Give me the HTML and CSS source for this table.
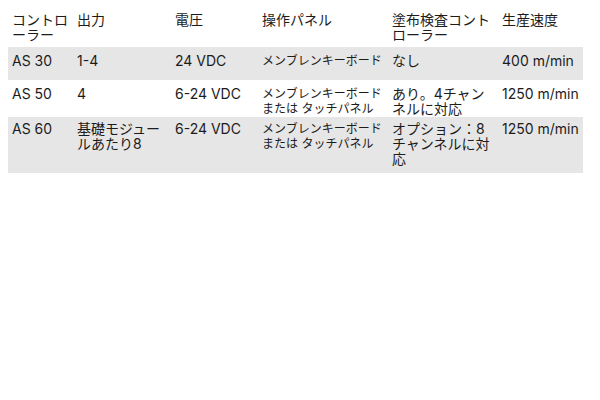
FILE: index.html
```html
<!DOCTYPE html>
<html lang="ja">
<head>
<meta charset="utf-8">
<link rel="stylesheet" href="styles.css">
</head>
<body>
<table class="spec">
  <colgroup>
    <col class="c-model">
    <col class="c-out">
    <col class="c-volt">
    <col class="c-panel">
    <col class="c-check">
    <col class="c-speed">
  </colgroup>
  <thead>
    <tr class="row-head">
      <th>コントローラー</th>
      <th>出力</th>
      <th>電圧</th>
      <th>操作パネル</th>
      <th>塗布検査コントローラー</th>
      <th class="speed">生産速度</th>
    </tr>
  </thead>
  <tbody>
    <tr class="row-a shade">
      <td>AS 30</td>
      <td>1-4</td>
      <td>24 VDC</td>
      <td class="panel">メンブレンキーボード</td>
      <td>なし</td>
      <td class="speed">400 m/min</td>
    </tr>
    <tr class="row-b">
      <td>AS 50</td>
      <td>4</td>
      <td>6-24 VDC</td>
      <td class="panel">メンブレンキーボード または タッチパネル</td>
      <td>あり。4チャンネルに対応</td>
      <td class="speed">1250 m/min</td>
    </tr>
    <tr class="row-c shade">
      <td>AS 60</td>
      <td>基礎モジュールあたり8</td>
      <td>6-24 VDC</td>
      <td class="panel">メンブレンキーボード または タッチパネル</td>
      <td>オプション：8チャンネルに対応</td>
      <td class="speed">1250 m/min</td>
    </tr>
  </tbody>
</table>
</body>
</html>
```

FILE: styles.css
```css
html, body {
  margin: 0;
  padding: 0;
  background: #ffffff;
}
body {
  padding: 8px;
  font-family: "Inter", "Noto Sans CJK JP", sans-serif;
  font-size: 14px;
  color: #1c1c1c;
}
.spec {
  width: 575px;
  table-layout: fixed;
  border-collapse: collapse;
  border-spacing: 0;
}
.c-model { width: 65px; }
.c-out { width: 98px; }
.c-volt { width: 87px; }
.c-panel { width: 130px; }
.c-check { width: 110px; }
.c-speed { width: 85px; }

.spec th,
.spec td {
  font-weight: normal;
  text-align: left;
  vertical-align: top;
  line-height: 15px;
  padding: 6px 4px 0 4px;
  overflow-wrap: anywhere;
}
.spec .panel {
  font-size: 12px;
  line-height: 15px;
}
.spec .speed {
  white-space: nowrap;
}
.shade {
  background: #e6e6e6;
}
.row-head { height: 39px; }
.row-head th { padding-top: 4px; }
.row-a { height: 33px; }
.row-b { height: 37px; }
.row-c { height: 56px; }
.row-c td { padding-top: 4px; }
```
